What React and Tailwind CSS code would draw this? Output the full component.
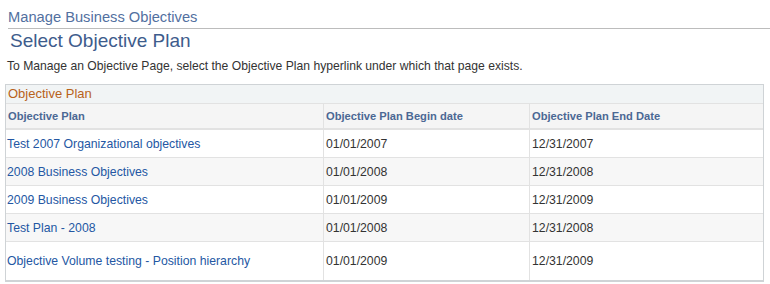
export default function App() {
  const rows = [
    ["Test 2007 Organizational objectives", "01/01/2007", "12/31/2007"],
    ["2008 Business Objectives", "01/01/2008", "12/31/2008"],
    ["2009 Business Objectives", "01/01/2009", "12/31/2009"],
    ["Test Plan - 2008", "01/01/2008", "12/31/2008"],
    ["Objective Volume testing - Position hierarchy", "01/01/2009", "12/31/2009"],
  ];
  return (
    <div className="w-[770px] h-[284px] bg-white font-['Liberation_Sans',Arial,sans-serif] overflow-hidden">
      <div className="ml-[8px] pt-[7px] border-b border-[#bcbcbc] h-[29px] text-[14.7px] leading-[20px] text-[#52709f]">
        Manage Business Objectives
      </div>
      <div className="ml-[10px] mt-[0px] text-[19px] leading-[23px] text-[#3e5c8c]">Select Objective Plan</div>
      <div className="ml-[7px] mt-[7px] text-[12.15px] leading-[15px] text-[#333]">
        To Manage an Objective Page, select the Objective Plan hyperlink under which that page exists.
      </div>
      <div className="ml-[5px] mt-[10px] w-[759px] border border-[#cfd3d6] border-b-2">
        <div className="h-[19px] bg-[#f1f4f5] px-[2px] text-[13px] leading-[18px] text-[#b8621b] border-b border-[#e2e2e2]">
          Objective Plan
        </div>
        <div className="grid grid-cols-[318px_206px_1fr]">
          {["Objective Plan", "Objective Plan Begin date", "Objective Plan End Date"].map((h, i) => (
            <div
              key={h}
              className={`h-[26px] bg-[#f5f5f5] border-b-2 border-[#e2e2e2] px-[2px] text-[11.15px] font-bold leading-[25px] text-[#4b6894] ${i < 2 ? "border-r" : ""}`}
            >
              {h}
            </div>
          ))}
          {rows.map((r, ri) =>
            r.map((c, i) => (
              <div
                key={ri + "-" + i}
                className={`${ri === 4 ? "h-[38px] leading-[38px]" : "h-[28px] leading-[28px] border-b"} ${ri % 2 === 1 ? "bg-[#f7f7f7]" : "bg-white"} border-[#e2e2e2] ${i === 0 ? "pl-[1px] pr-[2px] text-[#2457a3]" : "px-[2px] text-[#333]"} text-[12.25px] ${i < 2 ? "border-r" : ""}`}
              >
                {c}
              </div>
            ))
          )}
        </div>
      </div>
    </div>
  );
}
